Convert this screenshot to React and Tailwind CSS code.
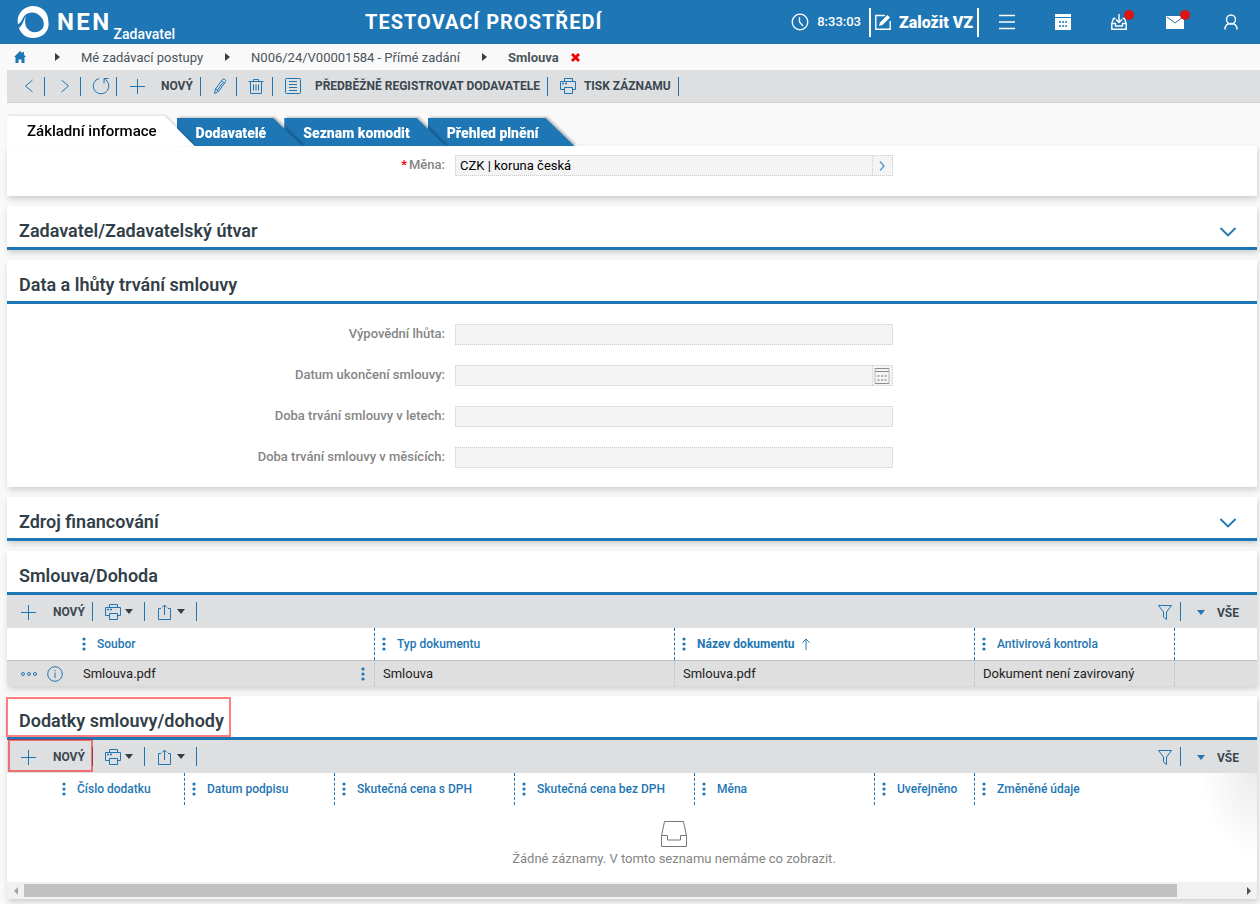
const Svg = ({ size = 'size-4', box = '0 0 16 16', children, className = '' }) => (
  <svg viewBox={box} className={`${size} shrink-0 ${className}`} fill="none" stroke="currentColor" strokeWidth="1" aria-hidden="true">
    {children}
  </svg>
);

const ChevronLeft = () => <Svg><path d="M11.500 2 4.500 8l7 6" /></Svg>;
const ChevronRight = () => <Svg><path d="M4.500 2l7 6L4.500 14" /></Svg>;
const Refresh = () => (
  <Svg size="size-[18px]" box="0 0 18 18"><path d="M7 1.500A7.800 7.800 0 1 0 15 4M16.500 1.500h-4.500v5M12 1.500l3.500 3" /></Svg>
);
const Plus = () => <Svg><path d="M8.500 1v15M1 8.500h15" /></Svg>;
const Pencil = () => (
  <Svg><path d="M2.500 15.500l1-4.500 7-9.500c1-1.500 4 .5 3 2.300l-7 9.700zM9.500 3l3 2.200M10.500 5L5.500 12M3.500 11l3 2.300" /></Svg>
);
const Trash = () => (
  <Svg><path d="M.5 3.500h15M5.500 3.500v-2h5v2M2.500 3.500v12h11v-12M5.500 6.500v6M8 6.500v6M10.500 6.500v6" /></Svg>
);
const List = () => (
  <Svg><rect x=".5" y=".5" width="15" height="15" rx="1" /><path d="M4 3.500h8M4 6.500h8M4 9.500h8M4 12.500h8" /></Svg>
);
const Printer = () => (
  <Svg><path d="M4.500 3.500v-3h8v3M4 11.500H.5v-8h15v8H12.500M4.500 9.500h8v6h-8z" /><path d="M2 5.500h2M5 5.500h2" strokeWidth="1.500" /></Svg>
);
const Share = () => (
  <Svg><path d="M4 4.500H1.500v11h12v-11H11M7.500 11V1M5 3.500L7.500 1l2.500 2.500" /></Svg>
);
const Filter = () => (
  <Svg><path d="M1.500 1.500h13L9.500 8v7.500L6.500 13V8z" /></Svg>
);
const Caret = ({ className = '' }) => (
  <svg viewBox="0 0 8 5" className={`h-[5px] w-2 shrink-0 ${className}`} fill="currentColor" aria-hidden="true"><path d="M0 0h8L4 5z" /></svg>
);
const Dots = () => (
  <svg viewBox="0 0 4 14" className="h-3.5 w-1" fill="#1e76b4" aria-hidden="true">
    <circle cx="2" cy="2" r="1.600" /><circle cx="2" cy="7" r="1.600" /><circle cx="2" cy="12" r="1.600" />
  </svg>
);

const ToolButton = ({ label, className, children }) => (
  <button type="button" aria-label={label} className={`flex h-[19px] items-center border-r border-[#1e76b4] text-[#1e76b4] ${className}`}>
    {children}
  </button>
);

const Caption = ({ children }) => (
  <span className="text-xs leading-4 font-bold whitespace-nowrap text-[#3b4750]">{children}</span>
);

function Header() {
  return (
    <header className="flex h-11 items-center bg-[#1e76b4] pr-px text-white">
      <div className="flex w-[365px] shrink-0 items-center pl-[17px]">
        <svg viewBox="0 0 32 32" className="size-8 shrink-0" fill="#fff" aria-hidden="true">
          <path d="M1 18C-1 8 7 0 16 0c8 0 14 5 15 12 1 6-2 11-6 14 2-5 3-11-1-15C18 4 9 6 6 12c-2 4-4 6-5 6z" />
          <path d="M31 14c3 10-5 18-15 18C9 32 4 28 2 22c4-3 4-7 7-12-2 6-1 12 4 15 6 3 12 0 14-5 1-3 2-5 4-6z" />
        </svg>
        <span className="ml-2 text-2xl leading-8 font-bold tracking-widest">NEN</span>
        <span className="mt-6 pl-0.5 text-sm leading-5 font-medium">Zadavatel</span>
      </div>
      <h1 className="text-xl leading-6 font-bold tracking-wider whitespace-nowrap">TESTOVACÍ PROSTŘEDÍ</h1>
      <div className="ml-auto flex items-center">
        <Svg size="size-[18px]" box="0 0 18 18"><circle cx="9" cy="9" r="7.800" strokeWidth="1.300" /><path d="M8.500 4v5l3.500 4" strokeWidth="1.300" /></Svg>
        <span className="ml-2 text-[13px] leading-5 font-medium">8:33:03</span>
        <button type="button" className="ml-2 flex h-[29px] items-center gap-2 border-x-2 border-white px-1 text-base font-black whitespace-nowrap">
          <Svg><path d="M10 1.500H.8v13.700h14.400V7" strokeWidth="1.400" /><path d="M4 12l1-3.500L12.500 1 15 3.500 7.500 11z" fill="currentColor" stroke="none" /></Svg>
          <span className="pt-0.5">Založit VZ</span>
        </button>
        <button type="button" aria-label="Menu" className="flex h-11 w-14 items-center justify-center">
          <Svg><path d="M0 1.500h16M0 8h16M0 14.500h16" strokeWidth="1.700" /></Svg>
        </button>
        <button type="button" aria-label="Kalendář" className="flex h-11 w-14 items-center justify-center">
          <Svg><path d="M0 0h16v3H0zM0 4h16v12H0z" fill="currentColor" stroke="none" /><path d="M4 8h2M7 8h2M10 8h2M4 12h2M7 12h2M10 12h2" stroke="#1e76b4" strokeWidth="1.500" /></Svg>
        </button>
        <button type="button" aria-label="Stažené" className="relative flex h-11 w-14 items-center justify-center">
          <Svg><path d="M4.500 4.500h-2L.8 9.500v5.700h14.400V9.500l-1.700-5h-2M.8 9.500h3.700v2.500h7V9.500h3.700M8 0v8M5 5.500l3 3 3-3" strokeWidth="1.400" /></Svg>
          <span className="absolute top-2.5 right-[13px] size-2.5 rounded-full bg-[#dc1414]" />
        </button>
        <button type="button" aria-label="Zprávy" className="relative flex h-11 w-14 items-center justify-center">
          <Svg size="h-4 w-[18px]" box="0 0 18 16"><path d="M0 2h18v13H0z" fill="currentColor" stroke="none" /><path d="M1 3l8 6 8-6" stroke="#1e76b4" /></Svg>
          <span className="absolute top-2.5 right-[13px] size-2.5 rounded-full bg-[#dc1414]" />
        </button>
        <button type="button" aria-label="Uživatel" className="flex h-11 w-14 items-center justify-center">
          <Svg><circle cx="8" cy="5.500" r="4.500" strokeWidth="1.400" /><path d="M2 15.500c0-4 2.500-6 6-6s6 2 6 6" strokeWidth="1.400" /></Svg>
        </button>
      </div>
    </header>
  );
}

const CrumbArrow = ({ className }) => (
  <svg viewBox="0 0 5 8" className={`h-2 w-[5px] shrink-0 ${className}`} fill="#333f48" aria-hidden="true"><path d="M0 0l5 4-5 4z" /></svg>
);

function Breadcrumb() {
  return (
    <nav aria-label="Drobečková navigace" className="flex h-[26px] items-center pl-3.5 text-[13px] leading-4 whitespace-nowrap text-[#4a545c]">
      <a href="#" aria-label="Domů" className="text-[#1e76b4]">
        <svg viewBox="0 0 12 12" className="size-3" fill="currentColor" aria-hidden="true"><path d="M6 0l2.500 2.200V1H10v2.800L12 6h-1.500v6H7.500V8.500h-3V12h-3V6H0z" /></svg>
      </a>
      <CrumbArrow className="ml-[29px]" />
      <a href="#" className="ml-[21px] pt-0.5">Mé zadávací postupy</a>
      <CrumbArrow className="ml-[22px]" />
      <a href="#" className="ml-[21px] pt-0.5">N006/24/V00001584 - Přímé zadání</a>
      <CrumbArrow className="ml-[22px]" />
      <span className="ml-[21px] pt-0.5 font-bold">Smlouva</span>
      <button type="button" aria-label="Zavřít" className="ml-3">
        <svg viewBox="0 0 9 9" className="size-[9px]" stroke="#f00000" strokeWidth="2.800" aria-hidden="true"><path d="M1 1l7 7M8 1L1 8" /></svg>
      </button>
    </nav>
  );
}

function MainToolbar() {
  return (
    <div role="toolbar" className="ml-[7px] flex h-[33px] items-center border-b border-[#d3d4d6] bg-[#dedfe1] pl-[2px]">
      <ToolButton label="Předchozí" className="w-9 justify-center pl-1"><ChevronLeft /></ToolButton>
      <ToolButton label="Další" className="w-9 justify-center pl-1"><ChevronRight /></ToolButton>
      <ToolButton label="Obnovit" className="w-9 justify-center pl-1"><Refresh /></ToolButton>
      <ToolButton className="gap-4 pr-[7px] pl-3"><Plus /><Caption>NOVÝ</Caption></ToolButton>
      <ToolButton label="Upravit" className="w-9 justify-center pl-1"><Pencil /></ToolButton>
      <ToolButton label="Smazat" className="w-9 justify-center pl-1"><Trash /></ToolButton>
      <ToolButton className="gap-3.5 pr-[7px] pl-3"><List /><Caption>PŘEDBĚŽNĚ REGISTROVAT DODAVATELE</Caption></ToolButton>
      <ToolButton className="gap-2 pr-[7px] pl-3"><Printer /><Caption>TISK ZÁZNAMU</Caption></ToolButton>
    </div>
  );
}

const tabs = [
  { name: 'Dodavatelé', z: 'z-30' },
  { name: 'Seznam komodit', z: 'z-20' },
  { name: 'Přehled plnění', z: 'z-10' },
];

function Tabs() {
  return (
    <div role="tablist" className="mt-[13px] flex items-end">
      <div className="z-40 drop-shadow-[1px_-1px_1px_rgba(0,0,0,0.12)]">
        <button type="button" role="tab" aria-selected="true" className="block h-[30px] bg-white pr-[38px] pl-5 text-[15px] leading-[30px] font-medium whitespace-nowrap text-black [clip-path:polygon(0_0,calc(100%-30px)_0,100%_100%,0_100%)]">
          Základní informace
        </button>
      </div>
      {tabs.map((t) => (
        <div key={t.name} className={`-ml-[18px] drop-shadow-[2px_-1px_1px_rgba(0,0,0,0.25)] ${t.z}`}>
          <button type="button" role="tab" aria-selected="false" className="block h-7 bg-[#1e76b4] pr-9 pl-[19px] text-sm leading-[30px] font-black whitespace-nowrap text-white [clip-path:polygon(0_0,calc(100%-29px)_0,100%_100%,0_100%)]">
            {t.name}
          </button>
        </div>
      ))}
    </div>
  );
}

const Card = ({ children, className = '' }) => (
  <section className={`relative bg-white shadow-[1px_3px_6px_rgba(0,0,0,0.17)] ${className}`}>{children}</section>
);

const CardHeader = ({ title, collapsed }) => (
  <div className="flex h-11 items-center justify-between border-b-[3px] border-[#1e76b4] pt-2 pr-5 pl-3">
    <h2 className="text-lg leading-6 font-semibold text-[#333f48]">{title}</h2>
    {collapsed && (
      <button type="button" aria-label={`Rozbalit ${title}`} className="pt-0.5 text-[#1e76b4]">
        <Svg size="h-2.5 w-[18px]" box="0 0 18 10"><path d="M1.500 1L9 8.500 16.500 1" strokeWidth="1.800" /></Svg>
      </button>
    )}
  </div>
);

const CalendarIcon = () => (
  <svg viewBox="0 0 16 16" className="size-4" fill="none" aria-hidden="true">
    <path d="M1 .5v15M15 .5v15" stroke="#ccc" strokeWidth="1.500" />
    <path d="M1 .5h14M1 3.500h14M1 15.500h14" stroke="#8c8c8c" />
    <path d="M3.500 8h2M7 8h2M10.500 8h2M3.500 12h2M7 12h2M10.500 12h2" stroke="#999" strokeWidth="1.500" />
  </svg>
);

function Field({ id, label, value = '', required, action, actionLabel }) {
  return (
    <div className="grid grid-cols-[448px_438px] items-start">
      <label htmlFor={id} className="pr-2.5 text-right text-[13px] leading-5 font-medium text-[#858585]">
        {required && <span className="pr-0.5 text-[#e00]">*</span>}
        {label}:
      </label>
      <div className="flex h-[21px] border border-dotted border-[#ccc] bg-[#f4f4f4]">
        <input id={id} type="text" readOnly defaultValue={value} className="min-w-0 grow px-1 text-[13px] text-black outline-none" />
        {action && (
          <button type="button" aria-label={actionLabel} className="flex w-5 items-center justify-center border-l border-dotted border-[#ccc] pr-px text-[#5b9bcb]">
            {action}
          </button>
        )}
      </div>
    </div>
  );
}

function ListToolbar() {
  return (
    <div role="toolbar" className="flex h-[33px] items-center bg-[#dedfe1] pr-[18px]">
      <ToolButton className="gap-[17px] pr-[7px] pl-[13px]"><Plus /><Caption>NOVÝ</Caption></ToolButton>
      <ToolButton label="Tisk" className="w-[52px] gap-1 pl-3"><Printer /><Caret className="text-[#333f48]" /></ToolButton>
      <ToolButton label="Export" className="w-[52px] gap-1 pl-3"><Share /><Caret className="text-[#333f48]" /></ToolButton>
      <ToolButton label="Filtr" className="ml-auto pr-[7px]"><Filter /></ToolButton>
      <button type="button" className="flex items-center gap-3 pt-0.5 pl-4 text-[#1e76b4]"><Caret /><Caption>VŠE</Caption></button>
    </div>
  );
}

const HeadCell = ({ name, sorted, last }) => (
  <th scope="col" className={`h-8 p-0 text-left ${last ? '' : 'border-r border-dashed border-[#1e76b4]'}`}>
    <div className="flex items-center gap-[11px] pl-[7px] text-[12px] leading-4 font-medium whitespace-nowrap text-[#1e76b4]">
      <button type="button" aria-label={`Nabídka sloupce ${name}`}><Dots /></button>
      <span className={sorted ? 'font-bold' : ''}>{name}</span>
      {sorted && <Svg size="h-3 w-2.5" box="0 0 10 12" className="-ml-1"><path d="M5 12V1M1.500 4.500L5 1l3.500 3.500" /></Svg>}
    </div>
  </th>
);

function ContractTable() {
  const cell = 'border-r border-dotted border-[#bbb] p-0 pl-2';
  return (
    <table className="w-full table-fixed border-separate border-spacing-0 text-[13px] leading-4 text-[#222]">
      <colgroup>
        <col className="w-[68px]" /><col className="w-[300px]" /><col className="w-[300px]" /><col className="w-[300px]" /><col className="w-[200px]" /><col />
      </colgroup>
      <thead>
        <tr>
          <td />
          <HeadCell name="Soubor" />
          <HeadCell name="Typ dokumentu" />
          <HeadCell name="Název dokumentu" sorted />
          <HeadCell name="Antivirová kontrola" />
          <td />
        </tr>
      </thead>
      <tbody>
        <tr className="h-[26px] bg-[#dfdfdf] [&>td]:border-t [&>td]:border-t-[#c0c0c0] [&>td]:[border-top-style:solid]">
          <td className="p-0 pl-3.5">
            <div className="flex items-center gap-2.5 text-[#1e76b4]">
              <button type="button" aria-label="Akce">
                <Svg size="h-1.5 w-4" box="0 0 16 6"><circle cx="2" cy="3" r="1.500" /><circle cx="8" cy="3" r="1.500" /><circle cx="14" cy="3" r="1.500" /></Svg>
              </button>
              <button type="button" aria-label="Informace">
                <Svg><circle cx="8" cy="8" r="7.300" /><path d="M8 6.500V12M8 4v1.300" /></Svg>
              </button>
            </div>
          </td>
          <td className={cell}>
            <div className="flex items-center justify-between pr-[9px]">Smlouva.pdf<button type="button" aria-label="Nabídka souboru"><Dots /></button></div>
          </td>
          <td className={cell}>Smlouva</td>
          <td className={cell}>Smlouva.pdf</td>
          <td className={cell}>Dokument není zavirovaný</td>
          <td />
        </tr>
      </tbody>
    </table>
  );
}

function AmendmentsTable() {
  return (
    <table className="w-full table-fixed border-separate border-spacing-0">
      <colgroup>
        <col className="w-12" /><col className="w-[130px]" /><col className="w-[150px]" /><col className="w-[180px]" /><col className="w-[180px]" /><col className="w-[180px]" /><col className="w-[100px]" /><col />
      </colgroup>
      <thead>
        <tr>
          <td />
          <HeadCell name="Číslo dodatku" />
          <HeadCell name="Datum podpisu" />
          <HeadCell name="Skutečná cena s DPH" />
          <HeadCell name="Skutečná cena bez DPH" />
          <HeadCell name="Měna" />
          <HeadCell name="Uveřejněno" />
          <HeadCell name="Změněné údaje" last />
        </tr>
      </thead>
      <tbody>
        <tr>
          <td colSpan={8} className="h-[77px] p-0 align-top">
            <div className="flex flex-col items-center pt-4 pl-[84px] text-[13px] leading-4 text-[#858585]">
              <svg viewBox="0 0 26 26" className="h-[26px] w-[26px]" fill="none" stroke="#777" aria-hidden="true">
                <path d="M.5 15L3.500.5h19L25.500 15v10.500H.5zM.5 14.500h6v4.500h13v-4.500h6" />
              </svg>
              <p className="mt-1">Žádné záznamy. V tomto seznamu nemáme co zobrazit.</p>
            </div>
          </td>
        </tr>
      </tbody>
    </table>
  );
}

const HorizontalScroll = () => (
  <div className="flex h-[17px] items-center bg-[#f1f1f1]">
    <button type="button" aria-label="Posunout vlevo" className="flex w-[17px] justify-center">
      <svg viewBox="0 0 4 8" className="h-2 w-1" fill="#a3a3a3" aria-hidden="true"><path d="M4 0v8L0 4z" /></svg>
    </button>
    <div className="h-[13px] grow"><div className="h-full w-[94.8%] bg-[#c1c1c1]" /></div>
    <button type="button" aria-label="Posunout vpravo" className="flex w-[17px] justify-center">
      <svg viewBox="0 0 4 8" className="h-2 w-1" fill="#505050" aria-hidden="true"><path d="M0 0v8l4-4z" /></svg>
    </button>
  </div>
);

export default function App() {
  return (
    <div className="min-h-screen bg-[#f9f9f9] font-['Roboto',sans-serif]">
      <Header />
      <Breadcrumb />
      <MainToolbar />
      <main className="pr-[3px] pb-[5px] pl-[7px]">
        <Tabs />
        <div className="flex flex-col gap-2.5">
          <Card className="pt-[9px] pb-5">
            <Field id="mena" label="Měna" value="CZK | koruna česká" required actionLabel="Vybrat měnu" action={<Svg size="size-2.5" box="0 0 10 10"><path d="M3 .5L7 5 3 9.500" strokeWidth="1.400" /></Svg>} />
          </Card>
          <Card><CardHeader title="Zadavatel/Zadavatelský útvar" collapsed /></Card>
          <Card>
            <CardHeader title="Data a lhůty trvání smlouvy" />
            <div className="flex flex-col gap-5 pt-5 pb-[19px]">
              <Field id="vypoved" label="Výpovědní lhůta" />
              <Field id="ukonceni" label="Datum ukončení smlouvy" actionLabel="Vybrat datum" action={<CalendarIcon />} />
              <Field id="roky" label="Doba trvání smlouvy v letech" />
              <Field id="mesice" label="Doba trvání smlouvy v měsících" />
            </div>
          </Card>
          <Card><CardHeader title="Zdroj financování" collapsed /></Card>
          <Card>
            <CardHeader title="Smlouva/Dohoda" />
            <ListToolbar />
            <ContractTable />
          </Card>
          <Card>
            <CardHeader title="Dodatky smlouvy/dohody" />
            <ListToolbar />
            <div className="bg-[radial-gradient(ellipse_56px_84px_at_100%_0,#ebebeb,#ffffff)]">
              <AmendmentsTable />
            </div>
            <HorizontalScroll />
            <div className="pointer-events-none absolute top-px -left-px h-10 w-[225px] border-2 border-[#ff0000]/50" />
            <div className="pointer-events-none absolute top-[43px] left-px h-[33px] w-[85px] border-2 border-[#ff0000]/50" />
          </Card>
        </div>
      </main>
    </div>
  );
}
